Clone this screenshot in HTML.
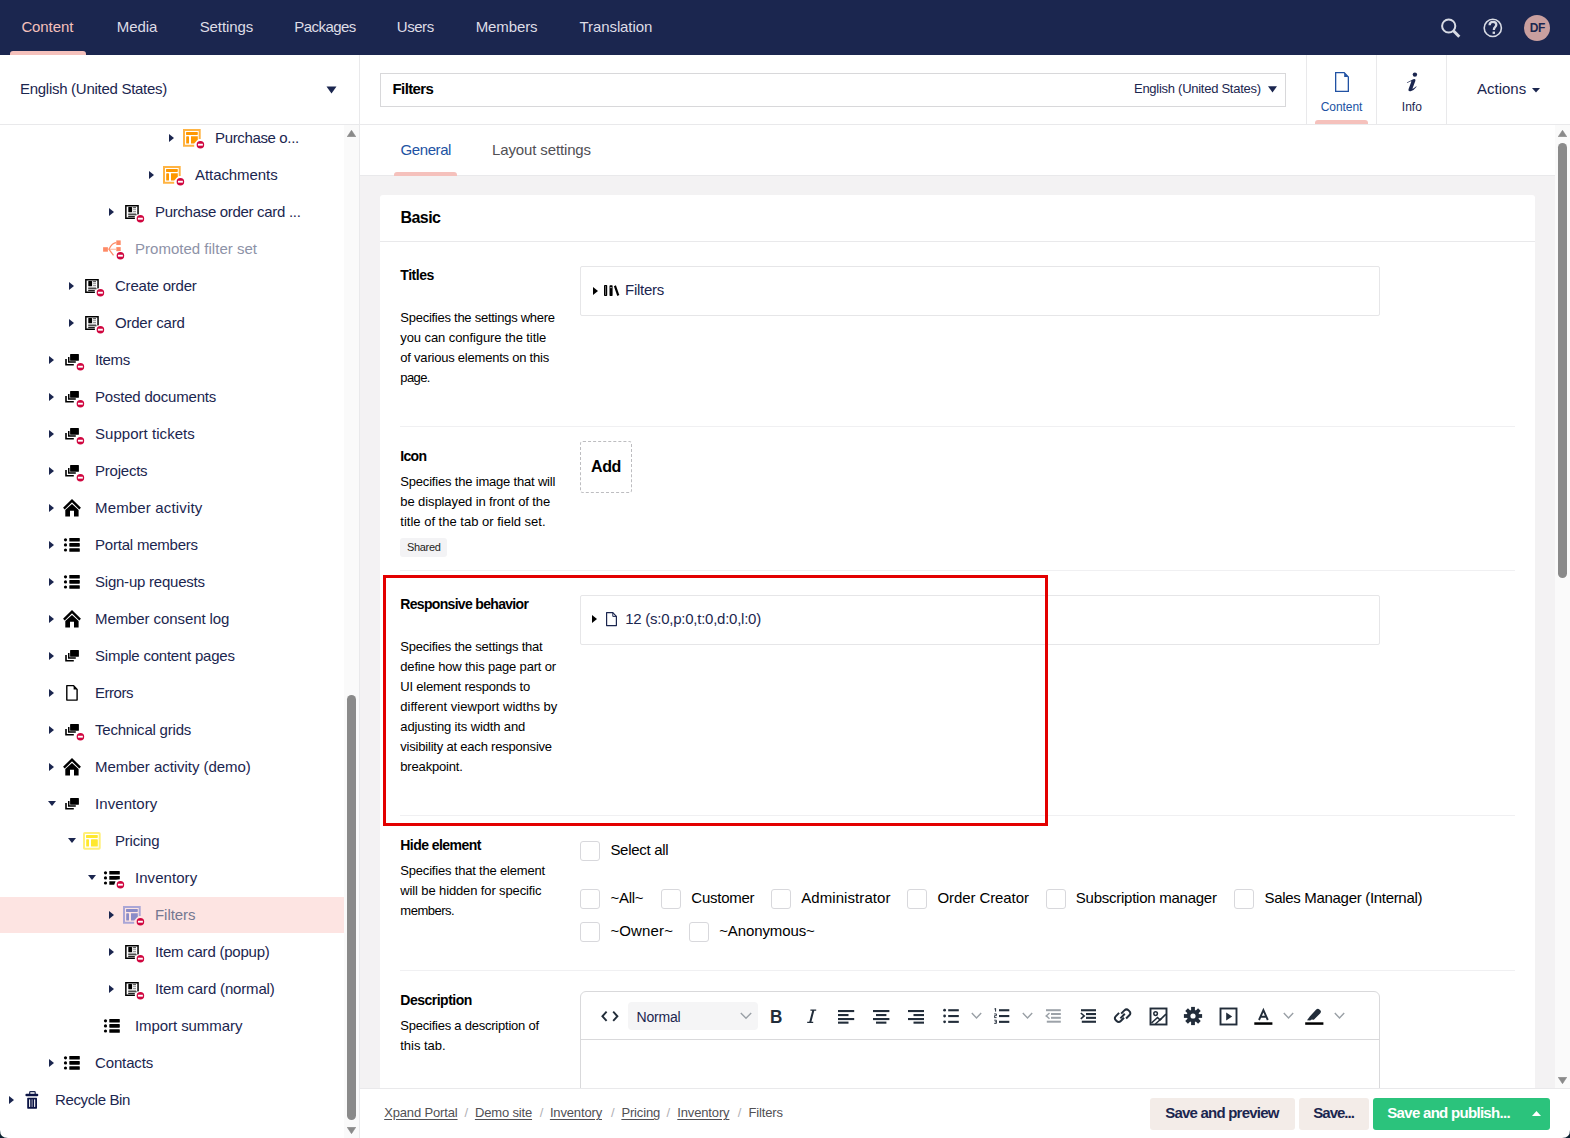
<!DOCTYPE html>
<html><head><meta charset="utf-8"><title>Filters</title>
<style>
html,body{margin:0;padding:0;}
body{width:1570px;height:1138px;overflow:hidden;position:relative;background:#fff;font-family:"Liberation Sans", sans-serif;}
.t{position:absolute;white-space:nowrap;}
.r{position:absolute;}
svg.r{display:block;}
</style></head><body>
<div class="r" style="left:0px;top:0px;width:1570px;height:55px;background:#1b264f;"></div>
<div class="t" style="left:21.4px;top:19px;font-size:15px;line-height:15px;color:#f5c1bc;font-weight:400;letter-spacing:-0.1px;">Content</div>
<div class="t" style="left:116.8px;top:19px;font-size:15px;line-height:15px;color:#dedde6;font-weight:400;letter-spacing:-0.1px;">Media</div>
<div class="t" style="left:199.7px;top:19px;font-size:15px;line-height:15px;color:#dedde6;font-weight:400;letter-spacing:-0.1px;">Settings</div>
<div class="t" style="left:294.3px;top:19px;font-size:15px;line-height:15px;color:#dedde6;font-weight:400;letter-spacing:-0.55px;">Packages</div>
<div class="t" style="left:396.8px;top:19px;font-size:15px;line-height:15px;color:#dedde6;font-weight:400;letter-spacing:-0.45px;">Users</div>
<div class="t" style="left:475.7px;top:19px;font-size:15px;line-height:15px;color:#dedde6;font-weight:400;letter-spacing:-0.1px;">Members</div>
<div class="t" style="left:579.6px;top:19px;font-size:15px;line-height:15px;color:#dedde6;font-weight:400;letter-spacing:-0.1px;">Translation</div>
<div class="r" style="left:10px;top:51px;width:76px;height:4px;background:#f5c1bc;border-radius:3px 3px 0 0;"></div>
<svg class="r" style="left:1436px;top:13px" width="28" height="28" viewBox="0 0 28 28">
<circle cx="12.7" cy="13" r="6.6" fill="none" stroke="#d8dbe4" stroke-width="2"/>
<line x1="17.4" y1="17.8" x2="23.3" y2="23.8" stroke="#d8dbe4" stroke-width="3" stroke-linecap="butt"/></svg>
<svg class="r" style="left:1478px;top:13px" width="30" height="30" viewBox="0 0 30 30">
<circle cx="14.8" cy="14.9" r="8.6" fill="none" stroke="#d8dbe4" stroke-width="1.6"/>
<path d="M11.6 12.3 C11.6 9.9 13.2 8.9 15 8.9 C16.9 8.9 18.3 10.1 18.3 11.8 C18.3 13.8 15.9 14.2 15.9 16.4 L15.9 17.1" fill="none" stroke="#d8dbe4" stroke-width="2.3"/>
<rect x="14.6" y="18.6" width="2.4" height="2.3" fill="#d8dbe4"/></svg>
<div class="r" style="left:1524px;top:15px;width:26px;height:26px;background:#c99f9f;border-radius:50%;"></div>
<div class="t" style="left:1529.8px;top:22px;font-size:12px;line-height:12px;color:#1b264f;font-weight:700;letter-spacing:-0.5px;">DF</div>
<div class="r" style="left:0px;top:124px;width:1570px;height:1px;background:#e9e9eb;"></div>
<div class="r" style="left:359px;top:55px;width:1px;height:1083px;background:#e9e9eb;"></div>
<div class="t" style="left:20px;top:81px;font-size:15px;line-height:15px;color:#1b264f;font-weight:400;letter-spacing:-0.28px;">English (United States)</div>
<svg class="r" style="left:326px;top:86px" width="11" height="8" viewBox="0 0 11 8"><path d="M0.5 0.5 L10.5 0.5 L5.5 7.5 Z" fill="#1b264f"/></svg>
<div class="r" style="left:0px;top:897px;width:344px;height:36px;background:#fde4e2;"></div>
<svg class="r" style="left:169px;top:134px" width="5" height="8" viewBox="0 0 5 8"><path d="M0 0 L5 4 L0 8 Z" fill="#1b264f"/></svg>
<svg class="r" style="left:183px;top:129px;overflow:visible" width="18" height="18" viewBox="0 0 18 18"><path d="M11.2 16.7 H1 V1 H16.7 V10" fill="none" stroke="#ffb443" stroke-width="2"/><rect x="3" y="3" width="11.8" height="2.9" rx="0.6" fill="#ff9800"/><rect x="3.2" y="7.3" width="2.8" height="7.2" rx="0.6" fill="#ff9800"/><path d="M8 7.3 H14.8 V10.6 L11.2 14.5 H8 Z" fill="#ff9800"/><circle cx="17.4" cy="15.7" r="4.5" fill="#fff"/><circle cx="17.4" cy="15.7" r="3.75" fill="#d0063f"/><rect x="14.95" y="14.75" width="4.9" height="1.9" fill="#fff"/></svg>
<div class="t" style="left:215px;top:130px;font-size:15px;line-height:15px;color:#1b264f;font-weight:400;letter-spacing:-0.355px;">Purchase o...</div>
<svg class="r" style="left:149px;top:171px" width="5" height="8" viewBox="0 0 5 8"><path d="M0 0 L5 4 L0 8 Z" fill="#1b264f"/></svg>
<svg class="r" style="left:163px;top:166px;overflow:visible" width="18" height="18" viewBox="0 0 18 18"><path d="M11.2 16.7 H1 V1 H16.7 V10" fill="none" stroke="#ffb443" stroke-width="2"/><rect x="3" y="3" width="11.8" height="2.9" rx="0.6" fill="#ff9800"/><rect x="3.2" y="7.3" width="2.8" height="7.2" rx="0.6" fill="#ff9800"/><path d="M8 7.3 H14.8 V10.6 L11.2 14.5 H8 Z" fill="#ff9800"/><circle cx="17.4" cy="15.7" r="4.5" fill="#fff"/><circle cx="17.4" cy="15.7" r="3.75" fill="#d0063f"/><rect x="14.95" y="14.75" width="4.9" height="1.9" fill="#fff"/></svg>
<div class="t" style="left:195px;top:167px;font-size:15px;line-height:15px;color:#1b264f;font-weight:400;letter-spacing:-0.07px;">Attachments</div>
<svg class="r" style="left:109px;top:208px" width="5" height="8" viewBox="0 0 5 8"><path d="M0 0 L5 4 L0 8 Z" fill="#1b264f"/></svg>
<svg class="r" style="left:123px;top:203px;overflow:visible" width="18" height="18" viewBox="0 0 18 18"><path d="M11.9 15.15 H2.85 V2.65 H15.05 V11.6" fill="none" stroke="#000" stroke-width="1.5"/><rect x="5.3" y="4.1" width="3.8" height="5.1" rx="0.4" fill="#000"/><rect x="10.1" y="4.2" width="2.9" height="1" fill="#333"/><rect x="10.1" y="6.1" width="2.9" height="1.1" fill="#999"/><rect x="10.1" y="8" width="2.9" height="1.1" fill="#999"/><rect x="5.2" y="9.8" width="7.9" height="1.1" fill="#999"/><rect x="5.2" y="11.2" width="8.4" height="1.1" fill="#222"/><rect x="5.2" y="13" width="6.6" height="1.1" fill="#222"/><circle cx="17.4" cy="15.7" r="4.5" fill="#fff"/><circle cx="17.4" cy="15.7" r="3.75" fill="#d0063f"/><rect x="14.95" y="14.75" width="4.9" height="1.9" fill="#fff"/></svg>
<div class="t" style="left:155px;top:204px;font-size:15px;line-height:15px;color:#1b264f;font-weight:400;letter-spacing:-0.307px;">Purchase order card ...</div>
<svg class="r" style="left:103px;top:240px;overflow:visible" width="18" height="18" viewBox="0 0 18 18"><rect x="0.1" y="7.2" width="4.8" height="4.5" fill="#fe8a66"/><rect x="13.3" y="0.4" width="4.4" height="4.6" fill="#fe8a66"/><rect x="13.3" y="7.1" width="4.4" height="4.1" fill="#fe8a66"/><path d="M4.9 9.3 H13.3" stroke="#fec0aa" stroke-width="1.2"/><path d="M6 9.3 C8.2 4.7 10 2.7 13.3 2.7" fill="none" stroke="#fe8a66" stroke-width="1.2"/><path d="M6 9.3 L10.5 15.4" fill="none" stroke="#fe8a66" stroke-width="1.2"/><circle cx="17.4" cy="15.7" r="4.5" fill="#fff"/><circle cx="17.4" cy="15.7" r="3.75" fill="#d0063f"/><rect x="14.95" y="14.75" width="4.9" height="1.9" fill="#fff"/></svg>
<div class="t" style="left:135px;top:241px;font-size:15px;line-height:15px;color:#8d92a7;font-weight:400;letter-spacing:0.014px;">Promoted filter set</div>
<svg class="r" style="left:69px;top:282px" width="5" height="8" viewBox="0 0 5 8"><path d="M0 0 L5 4 L0 8 Z" fill="#1b264f"/></svg>
<svg class="r" style="left:83px;top:277px;overflow:visible" width="18" height="18" viewBox="0 0 18 18"><path d="M11.9 15.15 H2.85 V2.65 H15.05 V11.6" fill="none" stroke="#000" stroke-width="1.5"/><rect x="5.3" y="4.1" width="3.8" height="5.1" rx="0.4" fill="#000"/><rect x="10.1" y="4.2" width="2.9" height="1" fill="#333"/><rect x="10.1" y="6.1" width="2.9" height="1.1" fill="#999"/><rect x="10.1" y="8" width="2.9" height="1.1" fill="#999"/><rect x="5.2" y="9.8" width="7.9" height="1.1" fill="#999"/><rect x="5.2" y="11.2" width="8.4" height="1.1" fill="#222"/><rect x="5.2" y="13" width="6.6" height="1.1" fill="#222"/><circle cx="17.4" cy="15.7" r="4.5" fill="#fff"/><circle cx="17.4" cy="15.7" r="3.75" fill="#d0063f"/><rect x="14.95" y="14.75" width="4.9" height="1.9" fill="#fff"/></svg>
<div class="t" style="left:115px;top:278px;font-size:15px;line-height:15px;color:#1b264f;font-weight:400;letter-spacing:-0.216px;">Create order</div>
<svg class="r" style="left:69px;top:319px" width="5" height="8" viewBox="0 0 5 8"><path d="M0 0 L5 4 L0 8 Z" fill="#1b264f"/></svg>
<svg class="r" style="left:83px;top:314px;overflow:visible" width="18" height="18" viewBox="0 0 18 18"><path d="M11.9 15.15 H2.85 V2.65 H15.05 V11.6" fill="none" stroke="#000" stroke-width="1.5"/><rect x="5.3" y="4.1" width="3.8" height="5.1" rx="0.4" fill="#000"/><rect x="10.1" y="4.2" width="2.9" height="1" fill="#333"/><rect x="10.1" y="6.1" width="2.9" height="1.1" fill="#999"/><rect x="10.1" y="8" width="2.9" height="1.1" fill="#999"/><rect x="5.2" y="9.8" width="7.9" height="1.1" fill="#999"/><rect x="5.2" y="11.2" width="8.4" height="1.1" fill="#222"/><rect x="5.2" y="13" width="6.6" height="1.1" fill="#222"/><circle cx="17.4" cy="15.7" r="4.5" fill="#fff"/><circle cx="17.4" cy="15.7" r="3.75" fill="#d0063f"/><rect x="14.95" y="14.75" width="4.9" height="1.9" fill="#fff"/></svg>
<div class="t" style="left:115px;top:315px;font-size:15px;line-height:15px;color:#1b264f;font-weight:400;letter-spacing:-0.213px;">Order card</div>
<svg class="r" style="left:49px;top:356px" width="5" height="8" viewBox="0 0 5 8"><path d="M0 0 L5 4 L0 8 Z" fill="#1b264f"/></svg>
<svg class="r" style="left:63px;top:351px;overflow:visible" width="18" height="18" viewBox="0 0 18 18"><rect x="7.1" y="3.1" width="8.8" height="6.7" rx="0.5" fill="#000"/><path d="M5.75 6 V11 H12.8" fill="none" stroke="#000" stroke-width="1.5"/><path d="M3 8 V13.75 H10.8" fill="none" stroke="#000" stroke-width="1.6"/><circle cx="17.4" cy="15.7" r="4.5" fill="#fff"/><circle cx="17.4" cy="15.7" r="3.75" fill="#d0063f"/><rect x="14.95" y="14.75" width="4.9" height="1.9" fill="#fff"/></svg>
<div class="t" style="left:95px;top:352px;font-size:15px;line-height:15px;color:#1b264f;font-weight:400;letter-spacing:-0.355px;">Items</div>
<svg class="r" style="left:49px;top:393px" width="5" height="8" viewBox="0 0 5 8"><path d="M0 0 L5 4 L0 8 Z" fill="#1b264f"/></svg>
<svg class="r" style="left:63px;top:388px;overflow:visible" width="18" height="18" viewBox="0 0 18 18"><rect x="7.1" y="3.1" width="8.8" height="6.7" rx="0.5" fill="#000"/><path d="M5.75 6 V11 H12.8" fill="none" stroke="#000" stroke-width="1.5"/><path d="M3 8 V13.75 H10.8" fill="none" stroke="#000" stroke-width="1.6"/><circle cx="17.4" cy="15.7" r="4.5" fill="#fff"/><circle cx="17.4" cy="15.7" r="3.75" fill="#d0063f"/><rect x="14.95" y="14.75" width="4.9" height="1.9" fill="#fff"/></svg>
<div class="t" style="left:95px;top:389px;font-size:15px;line-height:15px;color:#1b264f;font-weight:400;letter-spacing:-0.2px;">Posted documents</div>
<svg class="r" style="left:49px;top:430px" width="5" height="8" viewBox="0 0 5 8"><path d="M0 0 L5 4 L0 8 Z" fill="#1b264f"/></svg>
<svg class="r" style="left:63px;top:425px;overflow:visible" width="18" height="18" viewBox="0 0 18 18"><rect x="7.1" y="3.1" width="8.8" height="6.7" rx="0.5" fill="#000"/><path d="M5.75 6 V11 H12.8" fill="none" stroke="#000" stroke-width="1.5"/><path d="M3 8 V13.75 H10.8" fill="none" stroke="#000" stroke-width="1.6"/><circle cx="17.4" cy="15.7" r="4.5" fill="#fff"/><circle cx="17.4" cy="15.7" r="3.75" fill="#d0063f"/><rect x="14.95" y="14.75" width="4.9" height="1.9" fill="#fff"/></svg>
<div class="t" style="left:95px;top:426px;font-size:15px;line-height:15px;color:#1b264f;font-weight:400;letter-spacing:0.041px;">Support tickets</div>
<svg class="r" style="left:49px;top:467px" width="5" height="8" viewBox="0 0 5 8"><path d="M0 0 L5 4 L0 8 Z" fill="#1b264f"/></svg>
<svg class="r" style="left:63px;top:462px;overflow:visible" width="18" height="18" viewBox="0 0 18 18"><rect x="7.1" y="3.1" width="8.8" height="6.7" rx="0.5" fill="#000"/><path d="M5.75 6 V11 H12.8" fill="none" stroke="#000" stroke-width="1.5"/><path d="M3 8 V13.75 H10.8" fill="none" stroke="#000" stroke-width="1.6"/><circle cx="17.4" cy="15.7" r="4.5" fill="#fff"/><circle cx="17.4" cy="15.7" r="3.75" fill="#d0063f"/><rect x="14.95" y="14.75" width="4.9" height="1.9" fill="#fff"/></svg>
<div class="t" style="left:95px;top:463px;font-size:15px;line-height:15px;color:#1b264f;font-weight:400;letter-spacing:-0.223px;">Projects</div>
<svg class="r" style="left:49px;top:504px" width="5" height="8" viewBox="0 0 5 8"><path d="M0 0 L5 4 L0 8 Z" fill="#1b264f"/></svg>
<svg class="r" style="left:63px;top:499px;overflow:visible" width="18" height="18" viewBox="0 0 18 18"><polyline points="0.9,9.7 9,1.7 17.1,9.7" fill="none" stroke="#000" stroke-width="2.4"/><path d="M2.3 17.5 V10.9 L9 4.9 L15.6 10.9 V17.5 H11 V11.8 H7 V17.5 Z" fill="#000"/></svg>
<div class="t" style="left:95px;top:500px;font-size:15px;line-height:15px;color:#1b264f;font-weight:400;letter-spacing:0.163px;">Member activity</div>
<svg class="r" style="left:49px;top:541px" width="5" height="8" viewBox="0 0 5 8"><path d="M0 0 L5 4 L0 8 Z" fill="#1b264f"/></svg>
<svg class="r" style="left:63px;top:536px;overflow:visible" width="18" height="18" viewBox="0 0 18 18"><circle cx="2.5" cy="3.8" r="1.6" fill="#000"/><circle cx="2.5" cy="8.9" r="1.6" fill="#000"/><circle cx="2.5" cy="14" r="1.6" fill="#000"/><rect x="6.3" y="2" width="10.5" height="3.6" rx="0.6" fill="#000"/><rect x="6.3" y="7.1" width="10.5" height="3.6" rx="0.6" fill="#000"/><rect x="6.3" y="12.2" width="10.5" height="3.6" rx="0.6" fill="#000"/></svg>
<div class="t" style="left:95px;top:537px;font-size:15px;line-height:15px;color:#1b264f;font-weight:400;letter-spacing:-0.211px;">Portal members</div>
<svg class="r" style="left:49px;top:578px" width="5" height="8" viewBox="0 0 5 8"><path d="M0 0 L5 4 L0 8 Z" fill="#1b264f"/></svg>
<svg class="r" style="left:63px;top:573px;overflow:visible" width="18" height="18" viewBox="0 0 18 18"><circle cx="2.5" cy="3.8" r="1.6" fill="#000"/><circle cx="2.5" cy="8.9" r="1.6" fill="#000"/><circle cx="2.5" cy="14" r="1.6" fill="#000"/><rect x="6.3" y="2" width="10.5" height="3.6" rx="0.6" fill="#000"/><rect x="6.3" y="7.1" width="10.5" height="3.6" rx="0.6" fill="#000"/><rect x="6.3" y="12.2" width="10.5" height="3.6" rx="0.6" fill="#000"/></svg>
<div class="t" style="left:95px;top:574px;font-size:15px;line-height:15px;color:#1b264f;font-weight:400;letter-spacing:-0.227px;">Sign-up requests</div>
<svg class="r" style="left:49px;top:615px" width="5" height="8" viewBox="0 0 5 8"><path d="M0 0 L5 4 L0 8 Z" fill="#1b264f"/></svg>
<svg class="r" style="left:63px;top:610px;overflow:visible" width="18" height="18" viewBox="0 0 18 18"><polyline points="0.9,9.7 9,1.7 17.1,9.7" fill="none" stroke="#000" stroke-width="2.4"/><path d="M2.3 17.5 V10.9 L9 4.9 L15.6 10.9 V17.5 H11 V11.8 H7 V17.5 Z" fill="#000"/></svg>
<div class="t" style="left:95px;top:611px;font-size:15px;line-height:15px;color:#1b264f;font-weight:400;letter-spacing:-0.086px;">Member consent log</div>
<svg class="r" style="left:49px;top:652px" width="5" height="8" viewBox="0 0 5 8"><path d="M0 0 L5 4 L0 8 Z" fill="#1b264f"/></svg>
<svg class="r" style="left:63px;top:647px;overflow:visible" width="18" height="18" viewBox="0 0 18 18"><rect x="7.1" y="3.1" width="8.8" height="6.7" rx="0.5" fill="#000"/><path d="M5.75 6 V11 H12.8" fill="none" stroke="#000" stroke-width="1.5"/><path d="M3 8 V13.75 H10.8" fill="none" stroke="#000" stroke-width="1.6"/></svg>
<div class="t" style="left:95px;top:648px;font-size:15px;line-height:15px;color:#1b264f;font-weight:400;letter-spacing:-0.227px;">Simple content pages</div>
<svg class="r" style="left:49px;top:689px" width="5" height="8" viewBox="0 0 5 8"><path d="M0 0 L5 4 L0 8 Z" fill="#1b264f"/></svg>
<svg class="r" style="left:63px;top:684px;overflow:visible" width="18" height="18" viewBox="0 0 18 18"><path d="M3.8 1.6 H10.6 L14.1 5.4 V16.1 H3.8 Z" fill="none" stroke="#000" stroke-width="1.4" stroke-linejoin="round"/><path d="M10.6 1.6 L14.1 5.4 H10.6 Z" fill="#000"/></svg>
<div class="t" style="left:95px;top:685px;font-size:15px;line-height:15px;color:#1b264f;font-weight:400;letter-spacing:-0.46px;">Errors</div>
<svg class="r" style="left:49px;top:726px" width="5" height="8" viewBox="0 0 5 8"><path d="M0 0 L5 4 L0 8 Z" fill="#1b264f"/></svg>
<svg class="r" style="left:63px;top:721px;overflow:visible" width="18" height="18" viewBox="0 0 18 18"><rect x="7.1" y="3.1" width="8.8" height="6.7" rx="0.5" fill="#000"/><path d="M5.75 6 V11 H12.8" fill="none" stroke="#000" stroke-width="1.5"/><path d="M3 8 V13.75 H10.8" fill="none" stroke="#000" stroke-width="1.6"/><circle cx="17.4" cy="15.7" r="4.5" fill="#fff"/><circle cx="17.4" cy="15.7" r="3.75" fill="#d0063f"/><rect x="14.95" y="14.75" width="4.9" height="1.9" fill="#fff"/></svg>
<div class="t" style="left:95px;top:722px;font-size:15px;line-height:15px;color:#1b264f;font-weight:400;letter-spacing:-0.209px;">Technical grids</div>
<svg class="r" style="left:49px;top:763px" width="5" height="8" viewBox="0 0 5 8"><path d="M0 0 L5 4 L0 8 Z" fill="#1b264f"/></svg>
<svg class="r" style="left:63px;top:758px;overflow:visible" width="18" height="18" viewBox="0 0 18 18"><polyline points="0.9,9.7 9,1.7 17.1,9.7" fill="none" stroke="#000" stroke-width="2.4"/><path d="M2.3 17.5 V10.9 L9 4.9 L15.6 10.9 V17.5 H11 V11.8 H7 V17.5 Z" fill="#000"/></svg>
<div class="t" style="left:95px;top:759px;font-size:15px;line-height:15px;color:#1b264f;font-weight:400;letter-spacing:-0.042px;">Member activity (demo)</div>
<svg class="r" style="left:48px;top:801px" width="8" height="5" viewBox="0 0 8 5"><path d="M0 0 L8 0 L4 5 Z" fill="#1b264f"/></svg>
<svg class="r" style="left:63px;top:795px;overflow:visible" width="18" height="18" viewBox="0 0 18 18"><rect x="7.1" y="3.1" width="8.8" height="6.7" rx="0.5" fill="#000"/><path d="M5.75 6 V11 H12.8" fill="none" stroke="#000" stroke-width="1.5"/><path d="M3 8 V13.75 H10.8" fill="none" stroke="#000" stroke-width="1.6"/></svg>
<div class="t" style="left:95px;top:796px;font-size:15px;line-height:15px;color:#1b264f;font-weight:400;letter-spacing:0.07px;">Inventory</div>
<svg class="r" style="left:68px;top:838px" width="8" height="5" viewBox="0 0 8 5"><path d="M0 0 L8 0 L4 5 Z" fill="#1b264f"/></svg>
<svg class="r" style="left:83px;top:832px;overflow:visible" width="18" height="18" viewBox="0 0 18 18"><rect x="1" y="1" width="15.7" height="15.7" rx="0.8" fill="none" stroke="#fff07a" stroke-width="2"/><rect x="3" y="3" width="11.8" height="2.9" rx="0.6" fill="#ffe82e"/><rect x="3.2" y="7.3" width="2.8" height="7.2" rx="0.6" fill="#ffe82e"/><rect x="8" y="7.3" width="6.8" height="7.2" rx="0.6" fill="#ffe82e"/></svg>
<div class="t" style="left:115px;top:833px;font-size:15px;line-height:15px;color:#1b264f;font-weight:400;letter-spacing:-0.213px;">Pricing</div>
<svg class="r" style="left:88px;top:875px" width="8" height="5" viewBox="0 0 8 5"><path d="M0 0 L8 0 L4 5 Z" fill="#1b264f"/></svg>
<svg class="r" style="left:103px;top:869px;overflow:visible" width="18" height="18" viewBox="0 0 18 18"><circle cx="2.5" cy="3.8" r="1.6" fill="#000"/><circle cx="2.5" cy="8.9" r="1.6" fill="#000"/><circle cx="2.5" cy="14" r="1.6" fill="#000"/><rect x="6.3" y="2" width="10.5" height="3.6" rx="0.6" fill="#000"/><path d="M6.3 7.1 H16.8 V10.3 L13 10.7 H6.3 Z" fill="#000"/><path d="M6.3 12.2 H12.5 L11.2 15.8 H6.3 Z" fill="#000"/><circle cx="17.4" cy="15.7" r="4.5" fill="#fff"/><circle cx="17.4" cy="15.7" r="3.75" fill="#d0063f"/><rect x="14.95" y="14.75" width="4.9" height="1.9" fill="#fff"/></svg>
<div class="t" style="left:135px;top:870px;font-size:15px;line-height:15px;color:#1b264f;font-weight:400;letter-spacing:0.057px;">Inventory</div>
<svg class="r" style="left:109px;top:911px" width="5" height="8" viewBox="0 0 5 8"><path d="M0 0 L5 4 L0 8 Z" fill="#1b264f"/></svg>
<svg class="r" style="left:123px;top:906px;overflow:visible" width="18" height="18" viewBox="0 0 18 18"><path d="M11.2 16.7 H1 V1 H16.7 V10" fill="none" stroke="#aaa6d6" stroke-width="2"/><rect x="3" y="3" width="11.8" height="2.9" rx="0.6" fill="#8a8cc8"/><rect x="3.2" y="7.3" width="2.8" height="7.2" rx="0.6" fill="#8a8cc8"/><path d="M8 7.3 H14.8 V10.6 L11.2 14.5 H8 Z" fill="#8a8cc8"/><circle cx="17.4" cy="15.7" r="4.5" fill="#fde4e2"/><circle cx="17.4" cy="15.7" r="3.75" fill="#d0063f"/><rect x="14.95" y="14.75" width="4.9" height="1.9" fill="#fff"/></svg>
<div class="t" style="left:155px;top:907px;font-size:15px;line-height:15px;color:#747891;font-weight:400;letter-spacing:-0.047px;">Filters</div>
<svg class="r" style="left:109px;top:948px" width="5" height="8" viewBox="0 0 5 8"><path d="M0 0 L5 4 L0 8 Z" fill="#1b264f"/></svg>
<svg class="r" style="left:123px;top:943px;overflow:visible" width="18" height="18" viewBox="0 0 18 18"><path d="M11.9 15.15 H2.85 V2.65 H15.05 V11.6" fill="none" stroke="#000" stroke-width="1.5"/><rect x="5.3" y="4.1" width="3.8" height="5.1" rx="0.4" fill="#000"/><rect x="10.1" y="4.2" width="2.9" height="1" fill="#333"/><rect x="10.1" y="6.1" width="2.9" height="1.1" fill="#999"/><rect x="10.1" y="8" width="2.9" height="1.1" fill="#999"/><rect x="5.2" y="9.8" width="7.9" height="1.1" fill="#999"/><rect x="5.2" y="11.2" width="8.4" height="1.1" fill="#222"/><rect x="5.2" y="13" width="6.6" height="1.1" fill="#222"/><circle cx="17.4" cy="15.7" r="4.5" fill="#fff"/><circle cx="17.4" cy="15.7" r="3.75" fill="#d0063f"/><rect x="14.95" y="14.75" width="4.9" height="1.9" fill="#fff"/></svg>
<div class="t" style="left:155px;top:944px;font-size:15px;line-height:15px;color:#1b264f;font-weight:400;letter-spacing:-0.224px;">Item card (popup)</div>
<svg class="r" style="left:109px;top:985px" width="5" height="8" viewBox="0 0 5 8"><path d="M0 0 L5 4 L0 8 Z" fill="#1b264f"/></svg>
<svg class="r" style="left:123px;top:980px;overflow:visible" width="18" height="18" viewBox="0 0 18 18"><path d="M11.9 15.15 H2.85 V2.65 H15.05 V11.6" fill="none" stroke="#000" stroke-width="1.5"/><rect x="5.3" y="4.1" width="3.8" height="5.1" rx="0.4" fill="#000"/><rect x="10.1" y="4.2" width="2.9" height="1" fill="#333"/><rect x="10.1" y="6.1" width="2.9" height="1.1" fill="#999"/><rect x="10.1" y="8" width="2.9" height="1.1" fill="#999"/><rect x="5.2" y="9.8" width="7.9" height="1.1" fill="#999"/><rect x="5.2" y="11.2" width="8.4" height="1.1" fill="#222"/><rect x="5.2" y="13" width="6.6" height="1.1" fill="#222"/><circle cx="17.4" cy="15.7" r="4.5" fill="#fff"/><circle cx="17.4" cy="15.7" r="3.75" fill="#d0063f"/><rect x="14.95" y="14.75" width="4.9" height="1.9" fill="#fff"/></svg>
<div class="t" style="left:155px;top:981px;font-size:15px;line-height:15px;color:#1b264f;font-weight:400;letter-spacing:-0.162px;">Item card (normal)</div>
<svg class="r" style="left:103px;top:1017px;overflow:visible" width="18" height="18" viewBox="0 0 18 18"><circle cx="2.5" cy="3.8" r="1.6" fill="#000"/><circle cx="2.5" cy="8.9" r="1.6" fill="#000"/><circle cx="2.5" cy="14" r="1.6" fill="#000"/><rect x="6.3" y="2" width="10.5" height="3.6" rx="0.6" fill="#000"/><rect x="6.3" y="7.1" width="10.5" height="3.6" rx="0.6" fill="#000"/><rect x="6.3" y="12.2" width="10.5" height="3.6" rx="0.6" fill="#000"/></svg>
<div class="t" style="left:135px;top:1018px;font-size:15px;line-height:15px;color:#1b264f;font-weight:400;letter-spacing:-0.072px;">Import summary</div>
<svg class="r" style="left:49px;top:1059px" width="5" height="8" viewBox="0 0 5 8"><path d="M0 0 L5 4 L0 8 Z" fill="#1b264f"/></svg>
<svg class="r" style="left:63px;top:1054px;overflow:visible" width="18" height="18" viewBox="0 0 18 18"><circle cx="2.5" cy="3.8" r="1.6" fill="#000"/><circle cx="2.5" cy="8.9" r="1.6" fill="#000"/><circle cx="2.5" cy="14" r="1.6" fill="#000"/><rect x="6.3" y="2" width="10.5" height="3.6" rx="0.6" fill="#000"/><rect x="6.3" y="7.1" width="10.5" height="3.6" rx="0.6" fill="#000"/><rect x="6.3" y="12.2" width="10.5" height="3.6" rx="0.6" fill="#000"/></svg>
<div class="t" style="left:95px;top:1055px;font-size:15px;line-height:15px;color:#1b264f;font-weight:400;letter-spacing:-0.137px;">Contacts</div>
<svg class="r" style="left:9px;top:1096px" width="5" height="8" viewBox="0 0 5 8"><path d="M0 0 L5 4 L0 8 Z" fill="#1b264f"/></svg>
<svg class="r" style="left:23px;top:1091px;overflow:visible" width="18" height="18" viewBox="0 0 18 18"><path d="M6.7 2.9 V1.4 Q6.7 0.6 7.5 0.6 H11.4 Q12.2 0.6 12.2 1.4 V2.9" fill="none" stroke="#1b264f" stroke-width="1.2"/><rect x="2.4" y="2.8" width="12.9" height="2.5" rx="1.2" fill="#0c1445"/><rect x="4.2" y="6.8" width="9.8" height="10.9" rx="0.6" fill="#0c1445"/><rect x="6.1" y="8.3" width="1.1" height="7.7" rx="0.5" fill="#fff"/><rect x="8.6" y="8.3" width="1" height="7.7" fill="#aab"/><rect x="11.1" y="8.3" width="1.1" height="7.7" rx="0.5" fill="#fff"/></svg>
<div class="t" style="left:55px;top:1092px;font-size:15px;line-height:15px;color:#1b264f;font-weight:400;letter-spacing:-0.38px;">Recycle Bin</div>
<div class="r" style="left:344px;top:125px;width:15px;height:1013px;background:#fafafa;"></div>
<svg class="r" style="left:347px;top:130px" width="9" height="7" viewBox="0 0 9 7"><path d="M4.5 0.3 L8.8 6.8 L0.2 6.8 Z" fill="#8a8a8a" stroke="#8a8a8a" stroke-width="0.6" stroke-linejoin="round"/></svg>
<div class="r" style="left:347px;top:695px;width:9px;height:425px;background:#8a8a8a;border-radius:4.5px;"></div>
<svg class="r" style="left:347px;top:1127px" width="9" height="7" viewBox="0 0 9 7"><path d="M0.2 0.2 L8.8 0.2 L4.5 6.7 Z" fill="#8a8a8a" stroke="#8a8a8a" stroke-width="0.6" stroke-linejoin="round"/></svg>
<div class="r" style="left:380px;top:73px;width:906px;height:34px;background:#fff;border:1px solid #d8d8da;box-sizing:border-box;"></div>
<div class="t" style="left:392.5px;top:81px;font-size:15px;line-height:15px;color:#000;font-weight:700;letter-spacing:-0.6px;">Filters</div>
<div class="t" style="left:1134px;top:82px;font-size:13px;line-height:13px;color:#1b264f;font-weight:400;letter-spacing:-0.27px;">English (United States)</div>
<svg class="r" style="left:1268px;top:86px" width="9" height="7" viewBox="0 0 9 7"><path d="M0 0.3 L9 0.3 L4.5 6.5 Z" fill="#1b264f"/></svg>
<div class="r" style="left:1306px;top:55px;width:1px;height:69px;background:#e9e9eb;"></div>
<div class="r" style="left:1376px;top:55px;width:1px;height:69px;background:#e9e9eb;"></div>
<div class="r" style="left:1446px;top:55px;width:1px;height:69px;background:#e9e9eb;"></div>
<svg class="r" style="left:1334px;top:71px" width="16" height="22" viewBox="0 0 16 22"><path d="M1.65 1.65 H10.2 L14.35 6 V20.35 H1.65 Z" fill="none" stroke="#2152a3" stroke-width="1.3" stroke-linejoin="miter"/><path d="M10.2 1.65 L14.35 6 H10.2 Z" fill="#2152a3"/></svg>
<div class="t" style="left:1320.7px;top:101px;font-size:12px;line-height:12px;color:#2152a3;font-weight:400;letter-spacing:-0.05px;">Content</div>
<div class="r" style="left:1315px;top:120px;width:53px;height:4px;background:#f5c1bc;border-radius:3px 3px 0 0;"></div>
<svg class="r" style="left:1404px;top:70px" width="16" height="24" viewBox="0 0 16 24">
<circle cx="10.9" cy="4.6" r="2.2" fill="#1b264f"/>
<path d="M2.9 12.5 L9.2 9.3 Q11.9 8.4 11.4 10.7 L8.6 18.2 Q8.4 19 9.2 18.6 Q10.7 17.8 12.2 16.3 L12.6 16.8 Q10 20.5 6.6 21.2 Q3.9 21.7 4.5 19.3 L7.3 11.7 Q7.5 11 6.8 11.3 L3.1 12.9 Z" fill="#1b264f"/></svg>
<div class="t" style="left:1401.8px;top:101px;font-size:12px;line-height:12px;color:#1b264f;font-weight:400;letter-spacing:0px;">Info</div>
<div class="t" style="left:1477px;top:81px;font-size:15px;line-height:15px;color:#1b264f;font-weight:400;letter-spacing:0px;">Actions</div>
<svg class="r" style="left:1532px;top:88px" width="8" height="5" viewBox="0 0 8 5"><path d="M0 0 L8 0 L4 4.5 Z" fill="#1b264f"/></svg>
<div class="t" style="left:400.6px;top:142px;font-size:15px;line-height:15px;color:#2152a3;font-weight:400;letter-spacing:-0.42px;">General</div>
<div class="t" style="left:492px;top:142px;font-size:15px;line-height:15px;color:#515054;font-weight:400;letter-spacing:-0.13px;">Layout settings</div>
<div class="r" style="left:360px;top:175px;width:1195px;height:1px;background:#e9e9eb;"></div>
<div class="r" style="left:394px;top:172px;width:63px;height:4px;background:#f5c1bc;border-radius:3px 3px 0 0;"></div>
<div class="r" style="left:360px;top:176px;width:1195px;height:912px;background:#f3f2f3;"></div>
<div class="r" style="left:380px;top:195px;width:1155px;height:920px;background:#fff;border-radius:3px;"></div>
<div class="t" style="left:400.6px;top:210px;font-size:16px;line-height:16px;color:#000;font-weight:700;letter-spacing:-0.6px;">Basic</div>
<div class="r" style="left:380px;top:241px;width:1155px;height:1px;background:#e9e9eb;"></div>
<div class="t" style="left:400.3px;top:268px;font-size:14px;line-height:14px;color:#000;font-weight:700;letter-spacing:-0.45px;">Titles</div>
<div class="t" style="left:400.3px;top:311px;font-size:13px;line-height:13px;color:#000;font-weight:400;letter-spacing:-0.262px;">Specifies the settings where</div>
<div class="t" style="left:400.3px;top:331px;font-size:13px;line-height:13px;color:#000;font-weight:400;letter-spacing:-0.086px;">you can configure the title</div>
<div class="t" style="left:400.3px;top:351px;font-size:13px;line-height:13px;color:#000;font-weight:400;letter-spacing:-0.221px;">of various elements on this</div>
<div class="t" style="left:400.3px;top:371px;font-size:13px;line-height:13px;color:#000;font-weight:400;letter-spacing:-0.615px;">page.</div>
<div class="r" style="left:580px;top:266px;width:800px;height:50px;background:#fff;border:1px solid #e6e6e8;box-sizing:border-box;border-radius:2px;"></div>
<svg class="r" style="left:592.5px;top:287px" width="5" height="8" viewBox="0 0 5 8"><path d="M0 0 L5 4 L0 8 Z" fill="#000"/></svg>
<svg class="r" style="left:603px;top:284px" width="17" height="13" viewBox="0 0 17 13">
<rect x="1" y="1" width="3.2" height="11" rx="0.7" fill="#000"/><rect x="2.2" y="2" width="0.8" height="9" fill="#777"/>
<rect x="6.5" y="1.3" width="3.1" height="10.7" rx="0.7" fill="#000"/><circle cx="8" cy="3.6" r="0.7" fill="#fff"/>
<path d="M10.9 2.2 L12.9 1.3 L16.3 11.1 L14.3 12 Z" fill="#000"/></svg>
<div class="t" style="left:625px;top:282px;font-size:15px;line-height:15px;color:#1b264f;font-weight:400;letter-spacing:-0.25px;">Filters</div>
<div class="r" style="left:400px;top:426px;width:1115px;height:1px;background:#f0f0f2;"></div>
<div class="t" style="left:400.3px;top:449px;font-size:14px;line-height:14px;color:#000;font-weight:700;letter-spacing:-0.7px;">Icon</div>
<div class="t" style="left:400.3px;top:475px;font-size:13px;line-height:13px;color:#000;font-weight:400;letter-spacing:-0.19px;">Specifies the image that will</div>
<div class="t" style="left:400.3px;top:495px;font-size:13px;line-height:13px;color:#000;font-weight:400;letter-spacing:-0.096px;">be displayed in front of the</div>
<div class="t" style="left:400.3px;top:515px;font-size:13px;line-height:13px;color:#000;font-weight:400;letter-spacing:0.001px;">title of the tab or field set.</div>
<div class="r" style="left:400px;top:538px;width:47px;height:19px;background:#f3f3f5;border-radius:3px;"></div>
<div class="t" style="left:407.1px;top:542px;font-size:11px;line-height:11px;color:#1f1f22;font-weight:400;letter-spacing:-0.35px;">Shared</div>
<div class="r" style="left:580px;top:441px;width:52px;height:52px;background:#fff;border:1px dashed #bdbdc0;box-sizing:border-box;border-radius:3px;"></div>
<div class="t" style="left:591px;top:459px;font-size:16px;line-height:16px;color:#000;font-weight:700;letter-spacing:-0.4px;">Add</div>
<div class="r" style="left:400px;top:570px;width:1115px;height:1px;background:#f0f0f2;"></div>
<div class="t" style="left:400.3px;top:597px;font-size:14px;line-height:14px;color:#000;font-weight:700;letter-spacing:-0.68px;">Responsive behavior</div>
<div class="t" style="left:400.3px;top:640px;font-size:13px;line-height:13px;color:#000;font-weight:400;letter-spacing:-0.221px;">Specifies the settings that</div>
<div class="t" style="left:400.3px;top:660px;font-size:13px;line-height:13px;color:#000;font-weight:400;letter-spacing:-0.17px;">define how this page part or</div>
<div class="t" style="left:400.3px;top:680px;font-size:13px;line-height:13px;color:#000;font-weight:400;letter-spacing:-0.216px;">UI element responds to</div>
<div class="t" style="left:400.3px;top:700px;font-size:13px;line-height:13px;color:#000;font-weight:400;letter-spacing:0.019px;">different viewport widths by</div>
<div class="t" style="left:400.3px;top:720px;font-size:13px;line-height:13px;color:#000;font-weight:400;letter-spacing:-0.135px;">adjusting its width and</div>
<div class="t" style="left:400.3px;top:740px;font-size:13px;line-height:13px;color:#000;font-weight:400;letter-spacing:-0.204px;">visibility at each responsive</div>
<div class="t" style="left:400.3px;top:760px;font-size:13px;line-height:13px;color:#000;font-weight:400;letter-spacing:-0.17px;">breakpoint.</div>
<div class="r" style="left:580px;top:595px;width:800px;height:50px;background:#fff;border:1px solid #e6e6e8;box-sizing:border-box;border-radius:2px;"></div>
<svg class="r" style="left:592px;top:615px" width="5" height="8" viewBox="0 0 5 8"><path d="M0 0 L5 4 L0 8 Z" fill="#000"/></svg>
<svg class="r" style="left:605px;top:611px" width="13" height="16" viewBox="0 0 13 16"><path d="M1.6 1.6 H7.8 L11.4 5.4 V14.6 H1.6 Z" fill="none" stroke="#1b264f" stroke-width="1.2" stroke-linejoin="round"/><path d="M7.8 1.6 V5.4 H11.4" fill="none" stroke="#1b264f" stroke-width="1"/></svg>
<div class="t" style="left:625.2px;top:611px;font-size:15px;line-height:15px;color:#1b264f;font-weight:400;letter-spacing:-0.25px;">12 (s:0,p:0,t:0,d:0,l:0)</div>
<div class="r" style="left:400px;top:815px;width:1115px;height:1px;background:#f0f0f2;"></div>
<div class="r" style="left:383px;top:575px;width:665px;height:251px;background:transparent;border:3px solid #e30000;box-sizing:border-box;"></div>
<div class="t" style="left:400.3px;top:838px;font-size:14px;line-height:14px;color:#000;font-weight:700;letter-spacing:-0.55px;">Hide element</div>
<div class="t" style="left:400.3px;top:864px;font-size:13px;line-height:13px;color:#000;font-weight:400;letter-spacing:-0.192px;">Specifies that the element</div>
<div class="t" style="left:400.3px;top:884px;font-size:13px;line-height:13px;color:#000;font-weight:400;letter-spacing:-0.125px;">will be hidden for specific</div>
<div class="t" style="left:400.3px;top:904px;font-size:13px;line-height:13px;color:#000;font-weight:400;letter-spacing:-0.483px;">members.</div>
<div class="r" style="left:580px;top:841px;width:20px;height:20px;background:#fff;border:1px solid #d8d8dc;box-sizing:border-box;border-radius:3px;"></div>
<div class="t" style="left:610.4px;top:842px;font-size:15px;line-height:15px;color:#000;font-weight:400;letter-spacing:-0.3px;">Select all</div>
<div class="r" style="left:580px;top:889px;width:20px;height:20px;background:#fff;border:1px solid #d8d8dc;box-sizing:border-box;border-radius:3px;"></div>
<div class="t" style="left:610.4px;top:890px;font-size:15px;line-height:15px;color:#000;font-weight:400;letter-spacing:-0.25px;">~All~</div>
<div class="r" style="left:661px;top:889px;width:20px;height:20px;background:#fff;border:1px solid #d8d8dc;box-sizing:border-box;border-radius:3px;"></div>
<div class="t" style="left:691.3px;top:890px;font-size:15px;line-height:15px;color:#000;font-weight:400;letter-spacing:-0.25px;">Customer</div>
<div class="r" style="left:771px;top:889px;width:20px;height:20px;background:#fff;border:1px solid #d8d8dc;box-sizing:border-box;border-radius:3px;"></div>
<div class="t" style="left:801.2px;top:890px;font-size:15px;line-height:15px;color:#000;font-weight:400;letter-spacing:0.08px;">Administrator</div>
<div class="r" style="left:907px;top:889px;width:20px;height:20px;background:#fff;border:1px solid #d8d8dc;box-sizing:border-box;border-radius:3px;"></div>
<div class="t" style="left:937.5px;top:890px;font-size:15px;line-height:15px;color:#000;font-weight:400;letter-spacing:-0.09px;">Order Creator</div>
<div class="r" style="left:1046px;top:889px;width:20px;height:20px;background:#fff;border:1px solid #d8d8dc;box-sizing:border-box;border-radius:3px;"></div>
<div class="t" style="left:1075.8px;top:890px;font-size:15px;line-height:15px;color:#000;font-weight:400;letter-spacing:-0.25px;">Subscription manager</div>
<div class="r" style="left:1234px;top:889px;width:20px;height:20px;background:#fff;border:1px solid #d8d8dc;box-sizing:border-box;border-radius:3px;"></div>
<div class="t" style="left:1264.5px;top:890px;font-size:15px;line-height:15px;color:#000;font-weight:400;letter-spacing:-0.31px;">Sales Manager (Internal)</div>
<div class="r" style="left:580px;top:922px;width:20px;height:20px;background:#fff;border:1px solid #d8d8dc;box-sizing:border-box;border-radius:3px;"></div>
<div class="t" style="left:610.4px;top:923px;font-size:15px;line-height:15px;color:#000;font-weight:400;letter-spacing:0.15px;">~Owner~</div>
<div class="r" style="left:689px;top:922px;width:20px;height:20px;background:#fff;border:1px solid #d8d8dc;box-sizing:border-box;border-radius:3px;"></div>
<div class="t" style="left:719.2px;top:923px;font-size:15px;line-height:15px;color:#000;font-weight:400;letter-spacing:-0.11px;">~Anonymous~</div>
<div class="r" style="left:400px;top:970px;width:1115px;height:1px;background:#f0f0f2;"></div>
<div class="t" style="left:400.3px;top:993px;font-size:14px;line-height:14px;color:#000;font-weight:700;letter-spacing:-0.5px;">Description</div>
<div class="t" style="left:400.3px;top:1019px;font-size:13px;line-height:13px;color:#000;font-weight:400;letter-spacing:-0.232px;">Specifies a description of</div>
<div class="t" style="left:400.3px;top:1039px;font-size:13px;line-height:13px;color:#000;font-weight:400;letter-spacing:-0.04px;">this tab.</div>
<div class="r" style="left:580px;top:991px;width:800px;height:120px;background:#fff;border:1px solid #d9d9db;box-sizing:border-box;border-radius:6px;"></div>
<div class="r" style="left:581px;top:1039px;width:798px;height:1px;background:#d9d9db;"></div>
<svg class="r" style="left:600px;top:1008px" width="20" height="16" viewBox="0 0 20 16"><path d="M6.6 3.7 L2.4 8.25 L6.6 12.8 M13.2 3.7 L17.4 8.25 L13.2 12.8" fill="none" stroke="#222d3a" stroke-width="1.9" stroke-linejoin="miter"/></svg>
<div class="r" style="left:628px;top:1002px;width:130px;height:28px;background:#f5f5f6;border-radius:4px;"></div>
<div class="t" style="left:636.6px;top:1010px;font-size:14px;line-height:14px;color:#1b264f;font-weight:400;letter-spacing:-0.2px;">Normal</div>
<svg class="r" style="left:740px;top:1012px" width="12" height="8" viewBox="0 0 12 8"><path d="M0.8 1 L6 6.2 L11.2 1" fill="none" stroke="#9aa0a6" stroke-width="1.4"/></svg>
<div class="t" style="left:770px;top:1008px;font-size:18px;line-height:18px;color:#222d3a;font-weight:700;letter-spacing:0px;transform:scaleX(0.95);transform-origin:left;">B</div>
<svg class="r" style="left:806px;top:1009px" width="11" height="15" viewBox="0 0 11 15"><path d="M4.4 0.4 H10.2 V1.8 H8.3 L5.4 12.7 H7.2 V14.1 H1.2 V12.7 H3.3 L6.2 1.8 H4.4 Z" fill="#222d3a"/></svg>
<svg class="r" style="left:838px;top:1008.5px" width="18" height="16" viewBox="0 0 18 16"><rect x="0" y="1" width="16.2" height="2.1" fill="#222d3a"/><rect x="0" y="5" width="10.5" height="2.1" fill="#222d3a"/><rect x="0" y="9" width="16.2" height="2.1" fill="#222d3a"/><rect x="0" y="12.6" width="10.5" height="2.1" fill="#222d3a"/></svg>
<svg class="r" style="left:872.6px;top:1008.5px" width="18" height="16" viewBox="0 0 18 16"><rect x="0" y="1" width="16.4" height="2.1" fill="#222d3a"/><rect x="3" y="5" width="10.4" height="2.1" fill="#222d3a"/><rect x="0" y="9" width="16.4" height="2.1" fill="#222d3a"/><rect x="3" y="12.6" width="10.4" height="2.1" fill="#222d3a"/></svg>
<svg class="r" style="left:907.8px;top:1008.5px" width="18" height="16" viewBox="0 0 18 16"><rect x="0" y="1" width="16" height="2.1" fill="#222d3a"/><rect x="5.5" y="5" width="10.5" height="2.1" fill="#222d3a"/><rect x="0" y="9" width="16" height="2.1" fill="#222d3a"/><rect x="5.5" y="12.6" width="10.5" height="2.1" fill="#222d3a"/></svg>
<svg class="r" style="left:943px;top:1008px" width="16" height="16" viewBox="0 0 16 16"><circle cx="1.6" cy="2.2" r="1.4" fill="#222d3a"/><circle cx="1.6" cy="8" r="1.4" fill="#222d3a"/><circle cx="1.6" cy="13.8" r="1.4" fill="#222d3a"/><rect x="5.2" y="1.2" width="10.6" height="2.1" fill="#222d3a"/><rect x="5.2" y="7" width="10.6" height="2.1" fill="#222d3a"/><rect x="5.2" y="12.8" width="10.6" height="2.1" fill="#222d3a"/></svg>
<svg class="r" style="left:971px;top:1012px" width="11" height="8" viewBox="0 0 11 8"><path d="M0.8 1 L5.5 6 L10.2 1" fill="none" stroke="#9aa0a6" stroke-width="1.4"/></svg>
<svg class="r" style="left:993.5px;top:1008px" width="16" height="16" viewBox="0 0 16 16"><path d="M0.4 1 L1.6 0.3 V3.6" fill="none" stroke="#222d3a" stroke-width="1"/><path d="M0.2 5.9 H2.4 V7.7 H0.4 V9.6 H2.6" fill="none" stroke="#222d3a" stroke-width="0.9"/><path d="M0.2 12.2 H2.4 V15.4 H0.2 M0.8 13.8 H2.4" fill="none" stroke="#222d3a" stroke-width="0.9"/><rect x="5" y="1.2" width="10.3" height="2.1" fill="#222d3a"/><rect x="5" y="7" width="10.3" height="2.1" fill="#222d3a"/><rect x="5" y="12.8" width="10.3" height="2.1" fill="#222d3a"/></svg>
<svg class="r" style="left:1021.5px;top:1012px" width="11" height="8" viewBox="0 0 11 8"><path d="M0.8 1 L5.5 6 L10.2 1" fill="none" stroke="#9aa0a6" stroke-width="1.4"/></svg>
<svg class="r" style="left:1045px;top:1008px" width="17" height="16" viewBox="0 0 17 16"><rect x="1" y="1.2" width="14.8" height="2" fill="#9ca2a8"/><rect x="6" y="5" width="9.8" height="2" fill="#9ca2a8"/><rect x="6" y="8.8" width="9.8" height="2" fill="#9ca2a8"/><rect x="1.8" y="12.7" width="14" height="2" fill="#9ca2a8"/><path d="M4.5 5 L1.2 7.9 L4.5 10.8" fill="none" stroke="#9ca2a8" stroke-width="1.5"/></svg>
<svg class="r" style="left:1079.5px;top:1008px" width="17" height="16" viewBox="0 0 17 16"><rect x="1" y="1.2" width="15" height="2.1" fill="#222d3a"/><rect x="6" y="5" width="10" height="2.1" fill="#222d3a"/><rect x="6" y="8.8" width="10" height="2.1" fill="#222d3a"/><rect x="1.8" y="12.7" width="14.2" height="2.1" fill="#222d3a"/><path d="M0.8 5 L4.2 7.9 L0.8 10.8" fill="none" stroke="#222d3a" stroke-width="1.6"/></svg>
<svg class="r" style="left:1113px;top:1007px" width="20" height="18" viewBox="0 0 20 18"><g fill="none" stroke="#222d3a" stroke-width="2"><path d="M8.2 6.6 L11.4 3.4 Q13.5 1.3 15.6 3.4 L16.3 4.1 Q18.4 6.2 16.3 8.3 L13.1 11.5"/><path d="M11 10.8 L7.8 14 Q5.7 16.1 3.6 14 L2.9 13.3 Q0.8 11.2 2.9 9.1 L6.1 5.9"/><path d="M7.4 11.4 L11.8 6.7"/></g></svg>
<svg class="r" style="left:1148.5px;top:1006.5px" width="19" height="19" viewBox="0 0 19 19"><rect x="1.5" y="1.5" width="16" height="16" fill="none" stroke="#222d3a" stroke-width="1.9"/><circle cx="6.6" cy="6.6" r="1.8" fill="none" stroke="#222d3a" stroke-width="1.5"/><path d="M2.5 16 L8.5 10.5 L11 12.8 L17 7.2" fill="none" stroke="#222d3a" stroke-width="1.6"/><path d="M6.3 17 L12.5 11.5" fill="none" stroke="#222d3a" stroke-width="1.5"/></svg>
<svg class="r" style="left:1183px;top:1006px" width="20" height="20" viewBox="0 0 20 20"><g transform="translate(10,10)"><rect x="-1.9" y="-9.1" width="3.8" height="4" fill="#222d3a" transform="rotate(0)"/><rect x="-1.9" y="-9.1" width="3.8" height="4" fill="#222d3a" transform="rotate(45)"/><rect x="-1.9" y="-9.1" width="3.8" height="4" fill="#222d3a" transform="rotate(90)"/><rect x="-1.9" y="-9.1" width="3.8" height="4" fill="#222d3a" transform="rotate(135)"/><rect x="-1.9" y="-9.1" width="3.8" height="4" fill="#222d3a" transform="rotate(180)"/><rect x="-1.9" y="-9.1" width="3.8" height="4" fill="#222d3a" transform="rotate(225)"/><rect x="-1.9" y="-9.1" width="3.8" height="4" fill="#222d3a" transform="rotate(270)"/><rect x="-1.9" y="-9.1" width="3.8" height="4" fill="#222d3a" transform="rotate(315)"/><circle r="6.2" fill="#222d3a"/><circle r="2.6" fill="#fff"/></g></svg>
<svg class="r" style="left:1218.5px;top:1006.5px" width="19" height="19" viewBox="0 0 19 19"><rect x="1.5" y="1.5" width="16" height="16" fill="none" stroke="#222d3a" stroke-width="1.9"/><path d="M7.2 5.5 L13.2 9.5 L7.2 13.5 Z" fill="#222d3a"/></svg>
<svg class="r" style="left:1253.5px;top:1006px" width="19" height="19" viewBox="0 0 19 19"><path d="M5 14 L9.4 4 L13.8 14 M6.5 10.8 H12.3" fill="none" stroke="#222d3a" stroke-width="1.9"/><rect x="0.3" y="16.3" width="18.1" height="2.5" fill="#000"/></svg>
<svg class="r" style="left:1283px;top:1012px" width="11" height="8" viewBox="0 0 11 8"><path d="M0.8 1 L5.5 6 L10.2 1" fill="none" stroke="#9aa0a6" stroke-width="1.4"/></svg>
<svg class="r" style="left:1304.5px;top:1006px" width="19" height="19" viewBox="0 0 19 19"><path d="M2 14.2 L5 10.2 L11.2 3.6 Q12.8 2 14.4 3.4 L15.3 4.3 Q16.7 5.9 15.1 7.5 L8.8 13.7 L6.8 13.4 L5.2 14.5 Z" fill="#222d3a"/><rect x="0.2" y="16.3" width="18.2" height="2.5" fill="#000"/></svg>
<svg class="r" style="left:1333.5px;top:1012px" width="11" height="8" viewBox="0 0 11 8"><path d="M0.8 1 L5.5 6 L10.2 1" fill="none" stroke="#9aa0a6" stroke-width="1.4"/></svg>
<div class="r" style="left:1555px;top:125px;width:15px;height:963px;background:#fafafa;"></div>
<svg class="r" style="left:1558px;top:130px" width="9" height="7" viewBox="0 0 9 7"><path d="M4.5 0.3 L8.8 6.8 L0.2 6.8 Z" fill="#8a8a8a" stroke="#8a8a8a" stroke-width="0.6" stroke-linejoin="round"/></svg>
<div class="r" style="left:1558px;top:143px;width:9px;height:435px;background:#8a8a8a;border-radius:4.5px;"></div>
<svg class="r" style="left:1558px;top:1077px" width="9" height="7" viewBox="0 0 9 7"><path d="M0.2 0.2 L8.8 0.2 L4.5 6.7 Z" fill="#8a8a8a" stroke="#8a8a8a" stroke-width="0.6" stroke-linejoin="round"/></svg>
<div class="r" style="left:360px;top:1088px;width:1210px;height:50px;background:#fff;"></div>
<div class="r" style="left:360px;top:1088px;width:1210px;height:1px;background:#e9e9eb;"></div>
<div class="t" style="left:384.2px;top:1106px;font-size:13px;line-height:13px;color:#515054;font-weight:400;letter-spacing:-0.15px;text-decoration:underline;text-underline-offset:2px;">Xpand Portal</div>
<div class="t" style="left:464.5px;top:1106px;font-size:13px;line-height:13px;color:#b0b0b5;font-weight:400;letter-spacing:-0.15px;">/</div>
<div class="t" style="left:474.9px;top:1106px;font-size:13px;line-height:13px;color:#515054;font-weight:400;letter-spacing:-0.15px;text-decoration:underline;text-underline-offset:2px;">Demo site</div>
<div class="t" style="left:539.8px;top:1106px;font-size:13px;line-height:13px;color:#b0b0b5;font-weight:400;letter-spacing:-0.15px;">/</div>
<div class="t" style="left:549.9px;top:1106px;font-size:13px;line-height:13px;color:#515054;font-weight:400;letter-spacing:-0.15px;text-decoration:underline;text-underline-offset:2px;">Inventory</div>
<div class="t" style="left:611px;top:1106px;font-size:13px;line-height:13px;color:#b0b0b5;font-weight:400;letter-spacing:-0.15px;">/</div>
<div class="t" style="left:621.4px;top:1106px;font-size:13px;line-height:13px;color:#515054;font-weight:400;letter-spacing:-0.15px;text-decoration:underline;text-underline-offset:2px;">Pricing</div>
<div class="t" style="left:666.6px;top:1106px;font-size:13px;line-height:13px;color:#b0b0b5;font-weight:400;letter-spacing:-0.15px;">/</div>
<div class="t" style="left:677.3px;top:1106px;font-size:13px;line-height:13px;color:#515054;font-weight:400;letter-spacing:-0.15px;text-decoration:underline;text-underline-offset:2px;">Inventory</div>
<div class="t" style="left:737.8px;top:1106px;font-size:13px;line-height:13px;color:#b0b0b5;font-weight:400;letter-spacing:-0.15px;">/</div>
<div class="t" style="left:748.5px;top:1106px;font-size:13px;line-height:13px;color:#515054;font-weight:400;letter-spacing:-0.15px;">Filters</div>
<div class="r" style="left:1150px;top:1098px;width:145px;height:32px;background:#f3ece8;border-radius:3px;"></div>
<div class="t" style="left:1165.2px;top:1105px;font-size:15px;line-height:15px;color:#1b264f;font-weight:700;letter-spacing:-0.78px;">Save and preview</div>
<div class="r" style="left:1299px;top:1098px;width:70px;height:32px;background:#f3ece8;border-radius:3px;"></div>
<div class="t" style="left:1313.3px;top:1105px;font-size:15px;line-height:15px;color:#1b264f;font-weight:700;letter-spacing:-1.0px;">Save...</div>
<div class="r" style="left:1373px;top:1098px;width:177px;height:32px;background:#2bc37c;border-radius:3px;"></div>
<div class="t" style="left:1387.3px;top:1105px;font-size:15px;line-height:15px;color:#fff;font-weight:700;letter-spacing:-0.7px;">Save and publish...</div>
<svg class="r" style="left:1532px;top:1111px" width="9" height="5" viewBox="0 0 9 5"><path d="M0 5 L4.5 0 L9 5 Z" fill="#fff"/></svg>
<svg class="r" style="left:0px;top:1130px" width="8" height="8" viewBox="0 0 8 8"><path d="M0 0 Q0 8 8 8 L0 8 Z" fill="#0b2230"/></svg>
<svg class="r" style="left:1562px;top:1130px" width="8" height="8" viewBox="0 0 8 8"><path d="M8 0 Q8 8 0 8 L8 8 Z" fill="#0b2230"/></svg>
</body></html>
